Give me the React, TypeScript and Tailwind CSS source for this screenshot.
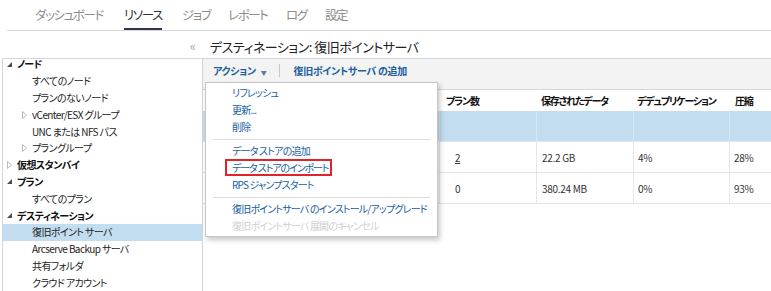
import React from "react";

const Expanded = () => (
  <svg width="5" height="5" viewBox="0 0 5 5" className="block">
    <polygon points="5,0 5,5 0,5" fill="#4a4a4a" />
  </svg>
);
const Collapsed = () => (
  <svg width="5" height="8" viewBox="0 0 5 8" className="block">
    <polygon points="0.5,0.5 4.5,4 0.5,7.5" fill="none" stroke="#b8b8b8" strokeWidth="1" />
  </svg>
);

type Node = { label: string; level: 0 | 1; icon?: "exp" | "col"; bold?: boolean; selected?: boolean };

const tree: Node[] = [
  { label: "ノード", level: 0, icon: "exp", bold: true },
  { label: "すべてのノード", level: 1 },
  { label: "プランのないノード", level: 1 },
  { label: "vCenter/ESX グループ", level: 1, icon: "col" },
  { label: "UNC または NFS パス", level: 1 },
  { label: "プラングループ", level: 1, icon: "col" },
  { label: "仮想スタンバイ", level: 0, icon: "col", bold: true },
  { label: "プラン", level: 0, icon: "exp", bold: true },
  { label: "すべてのプラン", level: 1 },
  { label: "デスティネーション", level: 0, icon: "exp", bold: true },
  { label: "復旧ポイント サーバ", level: 1, selected: true },
  { label: "Arcserve Backup サーバ", level: 1 },
  { label: "共有フォルダ", level: 1 },
  { label: "クラウド アカウント", level: 1 },
];

const tabs = [
  { label: "ダッシュボード", w: "w-[89px]" },
  { label: "リソース", w: "w-[58px]", active: true },
  { label: "ジョブ", w: "w-[46px]" },
  { label: "レポート", w: "w-[58px]" },
  { label: "ログ", w: "w-[39px]" },
  { label: "設定", w: "w-[40px]" },
];

export default function App() {
  return (
    <div className="w-[771px] h-[291px] overflow-hidden bg-white relative font-['Noto_Sans_CJK_JP',sans-serif] [font-feature-settings:'palt'] text-[#333]">
      {/* top nav */}
      <div className="h-[31px] ml-[7px] border-b border-[#d3d9df] flex pl-[28px]">
        {tabs.map((t) => (
          <div key={t.label} className={`${t.w} h-[30px] shrink-0`}>
            <div
              className={`inline-block h-[30px] pt-[5px] text-[12.5px] tracking-[-1.4px] leading-[20px] whitespace-nowrap ${
                t.active ? "text-[#333] border-b-2 border-[#33334a]" : "text-[#8c8c8c]"
              }`}
            >
              {t.label}
            </div>
          </div>
        ))}
      </div>

      {/* title row */}
      <div className="h-[27px] flex">
        <div className="w-[203px] shrink-0 text-right pr-[7px] pt-[6px] text-[13px] leading-[18px] text-[#a8a8a8]">«</div>
        <div className="pl-[7px] pt-[7px] text-[13px] tracking-[-0.5px] leading-[18px] text-[#222] whitespace-nowrap">
          デスティネーション: 復旧ポイントサーバ
        </div>
      </div>

      {/* body */}
      <div className="h-[233px] flex border-t border-[#cfd6dd] ml-[2px]">
        {/* sidebar */}
        <div className="w-[201px] shrink-0 border-l border-r border-[#cfd6dd] bg-white">
          <div className="-mt-[3px]">
            {tree.map((n) => (
              <div
                key={n.label}
                className={`h-[16.8px] flex items-center text-[10px] tracking-[-0.6px] leading-[16px] ${
                  n.level === 0 ? "pl-[2px]" : "pl-[17px]"
                } ${n.selected ? "bg-[#c1ddef]" : ""} ${n.bold ? "font-bold text-[#111]" : "text-[#222]"}`}
              >
                <div className="w-[12px] h-[16px] flex items-center pl-[2px] shrink-0">
                  {n.icon === "exp" ? <Expanded /> : n.icon === "col" ? <Collapsed /> : null}
                </div>
                <span className="whitespace-nowrap">{n.label}</span>
              </div>
            ))}
          </div>
        </div>

        {/* main */}
        <div className="flex-1 relative bg-white">
          <div className="h-[30px] bg-[#f3f3f3] flex items-start pt-[3px] pl-[10px] text-[10px] tracking-[-0.3px] font-bold text-[#1a5e9e]">
            <span className="leading-[17px]">アクション</span>
            <span className="ml-[5px] text-[6px] leading-[17px] mt-[2px] text-[#5a7a9a]">▼</span>
            <span className="ml-[13px] w-px h-[13px] bg-[#c8c8c8] mt-[2px]" />
            <span className="ml-[13px] leading-[17px]">復旧ポイントサーバ の追加</span>
          </div>

          {/* table */}
          <div className="w-[620px] border-t border-[#d0d7de] text-[10px]">
            <div className="h-[21px] flex items-center font-bold text-[#111] tracking-[-1.2px] whitespace-nowrap">
              <div className="w-[237px] shrink-0" />
              <div className="w-[97px] shrink-0 pl-[6px]">プラン数</div>
              <div className="w-[97px] shrink-0 pl-[4px]">保存されたデータ</div>
              <div className="w-[96px] shrink-0 pl-[3px]">デデュプリケーション</div>
              <div className="w-[80px] shrink-0 pl-[5px]">圧縮</div>
            </div>
            <div className="h-[31px] flex bg-[#c1ddef] border-b border-[#dfe6ec]">
              <div className="w-[237px] shrink-0 border-r border-[#d9e7f1]" />
              <div className="w-[97px] shrink-0 border-r border-[#d9e7f1]" />
              <div className="w-[97px] shrink-0 border-r border-[#d9e7f1]" />
              <div className="w-[96px] shrink-0 border-r border-[#d9e7f1]" />
              <div className="w-[80px] shrink-0" />
            </div>
            {[
              ["2", "22.2 GB", "4%", "28%"],
              ["0", "380.24 MB", "0%", "93%"],
            ].map((r, i) => (
              <div key={i} className="h-[31px] flex items-center border-b border-[#e3e3e3] text-[#333] tracking-[-0.3px]">
                <div className="w-[237px] h-full shrink-0 border-r border-[#e6e6e6]" />
                <div className="w-[97px] h-full shrink-0 border-r border-[#e6e6e6] pl-[15px] flex items-center">
                  <span className={i === 0 ? "underline" : ""}>{r[0]}</span>
                </div>
                <div className="w-[97px] h-full shrink-0 border-r border-[#e6e6e6] pl-[5px] flex items-center">{r[1]}</div>
                <div className="w-[96px] h-full shrink-0 border-r border-[#e6e6e6] pl-[4px] flex items-center">{r[2]}</div>
                <div className="w-[80px] h-full shrink-0 pl-[4px] flex items-center">{r[3]}</div>
              </div>
            ))}
          </div>
        </div>
      </div>

      {/* dropdown menu */}
      <div className="absolute left-[205px] top-[82px] w-[233px] h-[155px] bg-white border border-[#c6c6c6] shadow-[2px_3px_5px_rgba(0,0,0,0.22)] pt-[1px] text-[10px] tracking-[-0.8px] text-[#17609f] whitespace-nowrap">
        <div className="h-[17px] leading-[17px] pl-[26px]">リフレッシュ</div>
        <div className="h-[17px] leading-[17px] pl-[26px]">更新...</div>
        <div className="h-[17px] leading-[17px] pl-[26px]">削除</div>
        <div className="h-[7px] pt-[4px] px-[7px]"><div className="h-px bg-[#dcdcdc]" /></div>
        <div className="h-[17px] leading-[17px] pl-[26px]">データ ストアの追加</div>
        <div className="h-[17px] pl-[19px]">
          <div className="h-[17px] w-[107px] border-2 border-[#e3232c] pl-[5px] leading-[13px] tracking-[-1.1px]">
            データ ストアのインポート
          </div>
        </div>
        <div className="h-[17px] leading-[17px] pl-[26px]">RPS ジャンプスタート</div>
        <div className="h-[7px] pt-[4px] px-[7px]"><div className="h-px bg-[#dcdcdc]" /></div>
        <div className="h-[17px] leading-[17px] pl-[26px]">復旧ポイントサーバ のインストール/アップグレード</div>
        <div className="h-[17px] leading-[17px] pl-[26px] text-[#cfcfcf]">復旧ポイントサーバ 展開のキャンセル</div>
      </div>
    </div>
  );
}
